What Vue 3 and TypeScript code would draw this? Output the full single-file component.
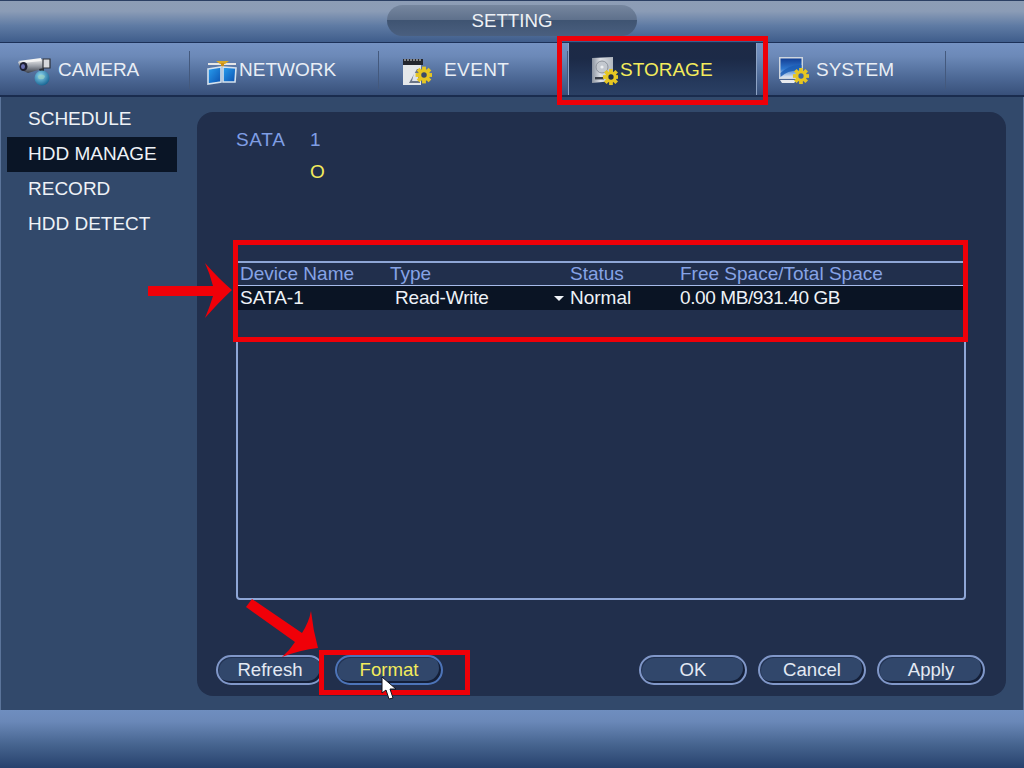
<script setup lang="ts">
const subItems = ['SCHEDULE', 'HDD MANAGE', 'RECORD', 'HDD DETECT']
const gearTeeth = [0, 45, 90, 135]
</script>

<template>
  <div class="screen">
    <header class="titlebar">
      <div class="pill">SETTING</div>
    </header>

    <nav class="tabs">
      <div class="tab">
        <svg class="icon camera" viewBox="0 0 36 30" width="36" height="30">
          <defs>
            <linearGradient id="camBody" x1="0" y1="0" x2="0" y2="1">
              <stop offset="0" stop-color="#f2f2f2" />
              <stop offset="0.5" stop-color="#9a9fa8" />
              <stop offset="1" stop-color="#3a3f4a" />
            </linearGradient>
            <radialGradient id="globe" cx="0.4" cy="0.35" r="0.7">
              <stop offset="0" stop-color="#8fd8f2" />
              <stop offset="1" stop-color="#12608f" />
            </radialGradient>
          </defs>
          <path d="M1 5 L27 2 L28 11 L11 16 L4 13 Z" fill="url(#camBody)" />
          <path d="M1 4 L24 1 L24 4 L6 6 Z" fill="#f4f4f4" />
          <path d="M26 2 h7 v9 h-7 z" fill="#d6d8dc" stroke="#2c3038" stroke-width="1.2" />
          <ellipse cx="6.5" cy="9.5" rx="4" ry="4.6" fill="#1e2032" />
          <ellipse cx="6" cy="9.5" rx="2" ry="2.6" fill="#6a6fb0" />
          <path d="M22 12 L27 11 L27 16 L24 17 Z" fill="#2a2e36" />
          <circle cx="25" cy="21" r="7.5" fill="url(#globe)" />
          <path d="M21 19 q4 -3 7 0 q-1 4 -4 3 q-3 1 -3 -3z" fill="#9ad0c0" opacity="0.7" />
        </svg>
        <span class="label">CAMERA</span>
      </div>

      <div class="tab">
        <svg class="icon network" viewBox="0 0 30 26" width="30" height="26">
          <defs>
            <linearGradient id="scr" x1="0" y1="0" x2="1" y2="1">
              <stop offset="0" stop-color="#2aa0f0" />
              <stop offset="1" stop-color="#0a50b0" />
            </linearGradient>
          </defs>
          <path d="M1 4 H29 V6 H1 Z" fill="#e6e6e6" />
          <path d="M9 2 H22 L18 5 H13 Z" fill="#dba927" />
          <path d="M14 4 h3 v4 h-3 z" fill="#c98f1c" />
          <path d="M1 10 L14 8 V23 L1 25 Z" fill="url(#scr)" stroke="#d5e2ee" stroke-width="1.6" />
          <path d="M16 8 L29 9 L28 23 L16 23 Z" fill="url(#scr)" stroke="#d5e2ee" stroke-width="1.6" />
        </svg>
        <span class="label tight">NETWORK</span>
      </div>

      <div class="tab">
        <svg class="icon event" viewBox="0 0 30 28" width="30" height="28">
          <rect x="1" y="2" width="20" height="6" fill="#23262e" />
          <path d="M2 3 h18" stroke="#ddd" stroke-dasharray="2 1" fill="none" />
          <rect x="1" y="8" width="18" height="20" fill="#e4e7ea" />
          <path d="M7 26 L15 12 L18 12 L18 26 Z" fill="#6c7688" />
          <path d="M12 16 L10 24 h7 l-2 -8z" fill="#dde2ea" />
          <g transform="translate(22 18) scale(1.2)">
            <g fill="#e6c622">
              <rect v-for="a in gearTeeth" :key="a" x="-1.6" y="-7" width="3.2" height="14" :transform="`rotate(${a})`" />
            </g>
            <circle r="5" fill="#e6c622" />
            <circle r="2.3" fill="#3a4a66" />
          </g>
        </svg>
        <span class="label wide">EVENT</span>
      </div>

      <div class="tab active">
        <svg class="icon storage" viewBox="0 0 28 30" width="28" height="30">
          <defs>
            <linearGradient id="hdd" x1="0" y1="0" x2="1" y2="0">
              <stop offset="0" stop-color="#8b93a0" />
              <stop offset="0.4" stop-color="#dde0e5" />
              <stop offset="1" stop-color="#b2b8c0" />
            </linearGradient>
          </defs>
          <path d="M2 2 L23 1 V25 L2 27 Z" fill="url(#hdd)" />
          <circle cx="12" cy="11" r="6" fill="#c3c8cf" stroke="#8d939c" />
          <circle cx="12" cy="11" r="1.6" fill="#eef0f2" />
          <rect x="5" y="21" width="9" height="2.4" fill="#3a3f48" />
          <g transform="translate(21 21) scale(1.15)">
            <g fill="#e6c622">
              <rect v-for="a in gearTeeth" :key="a" x="-1.6" y="-7" width="3.2" height="14" :transform="`rotate(${a})`" />
            </g>
            <circle r="5" fill="#e6c622" />
            <circle r="2.3" fill="#1f2c48" />
          </g>
        </svg>
        <span class="label tight yellow">STORAGE</span>
      </div>

      <div class="tab">
        <svg class="icon system" viewBox="0 0 32 30" width="32" height="30">
          <defs>
            <linearGradient id="mon" x1="0" y1="0" x2="0" y2="1">
              <stop offset="0" stop-color="#123f95" />
              <stop offset="0.55" stop-color="#2f78cf" />
              <stop offset="1" stop-color="#e4eaf2" />
            </linearGradient>
          </defs>
          <rect x="2" y="2" width="24" height="22" fill="#cfd6de" />
          <rect x="3.5" y="3.5" width="21" height="19" fill="url(#mon)" />
          <path d="M3.5 18 Q13 9 24.5 10 V16 Q13 14 3.5 22 Z" fill="#1b5db5" opacity="0.85" />
          <path d="M3 25 H20 L17 28 H5 Z" fill="#e8eaee" />
          <g transform="translate(24 21) scale(1.15)">
            <g fill="#e6c622">
              <rect v-for="a in gearTeeth" :key="a" x="-1.6" y="-7" width="3.2" height="14" :transform="`rotate(${a})`" />
            </g>
            <circle r="5" fill="#e6c622" />
            <circle r="2.3" fill="#3f67a6" />
          </g>
        </svg>
        <span class="label wide">SYSTEM</span>
      </div>
    </nav>

    <div class="main">
      <aside class="side">
        <div v-for="item in subItems" :key="item" class="side-item" :class="{ on: item === 'HDD MANAGE' }">{{ item }}</div>
      </aside>

      <section class="panel">
        <div class="sata">
          <div class="sata-row">
            <span class="sata-key">SATA</span>
            <span>1</span>
          </div>
          <div class="sata-row state">
            <span class="sata-key"></span>
            <span class="circle">O</span>
          </div>
        </div>

        <div class="table">
          <div class="thead">
            <span class="c1">Device Name</span>
            <span class="c2">Type</span>
            <span class="c3">Status</span>
            <span class="c4">Free Space/Total Space</span>
          </div>
          <div class="trow">
            <span class="c1">SATA-1</span>
            <span class="c2 type">Read-Write<i class="caret"></i></span>
            <span class="c3">Normal</span>
            <span class="c4 nums">0.00 MB/931.40 GB</span>
          </div>
        </div>

        <div class="actions">
          <div class="left-actions">
            <button class="btn">Refresh</button>
            <button class="btn hot">Format</button>
          </div>
          <div class="right-actions">
            <button class="btn">OK</button>
            <button class="btn">Cancel</button>
            <button class="btn">Apply</button>
          </div>
        </div>
      </section>
    </div>

    <footer class="footer"></footer>

    <!-- annotations drawn over the screenshot -->
    <div class="mark mark-storage"></div>
    <div class="mark mark-table"></div>
    <div class="mark mark-format"></div>
    <svg class="overlay" viewBox="0 0 1024 768" width="1024" height="768">
      <path d="M148 286 H213 Q210 274 205 263 Q219 279 232 290 Q219 302 205 318 Q210 306 213 296 H148 Z" fill="#f00008" />
      <path d="M252 599 L302 633 Q309 622 311 611 Q313 630 318 648 Q300 650 282 657 Q290 650 295 642 L246 607 Z" fill="#f00008" />
      <path d="M382 677 L382 693 L386 690 L389 699 L393 698 L390 689 L396 689 Z" fill="#fff" stroke="#10131c" stroke-width="1" />
    </svg>
  </div>
</template>

<style>
html, body { margin: 0; background: #32496b; }
</style>

<style scoped>
.screen {
  position: relative;
  width: 1024px;
  height: 768px;
  overflow: hidden;
  display: flex;
  flex-direction: column;
  font-family: "Liberation Sans", Arial, sans-serif;
  font-size: 19px;
  color: #e9eef5;
  background: #32496b;
}
.titlebar {
  height: 43px;
  flex: none;
  display: flex;
  justify-content: center;
  align-items: flex-start;
  padding-top: 5px;
  box-sizing: border-box;
  border-top: 1px solid #2b3f63;
  border-bottom: 1px solid #1c3158;
  background: linear-gradient(#8d9db5 0%, #8b9cb6 25%, #5f7ba4 60%, #3f5d8b 100%);
}
.pill {
  width: 250px;
  height: 31px;
  margin-top: -1px;
  border-radius: 16px;
  text-align: center;
  line-height: 32px;
  font-size: 18.7px;
  color: #eef1f5;
  background: linear-gradient(#76879f 0%, #5f718c 47%, #3f5472 50%, #4a5f7f 100%);
}
.tabs {
  height: 54px;
  flex: none;
  display: flex;
  box-sizing: border-box;
  border-bottom: 2px solid #1a2c4e;
  background: linear-gradient(#7492c2 0%, #6c89b8 25%, #4e6a97 65%, #38507a 100%);
}
.tab {
  width: 189px;
  flex: none;
  box-sizing: border-box;
  position: relative;
  display: flex;
  align-items: center;
  padding-top: 2px;
  padding-left: 17px;
}
.tab::after {
  content: "";
  position: absolute;
  right: -1px;
  top: 8px;
  bottom: 6px;
  width: 1px;
  background: #44597d;
}
.tab:nth-child(2) { padding-left: 18px; }
.tab:nth-child(3) { padding-left: 24px; }
.tab:nth-child(4) { padding-left: 21px; margin-left: 2px; width: 187px; }
.tab:nth-child(5) { padding-left: 21px; }
.icon { flex: none; display: block; }
.camera { margin-top: 4px; }
.network { margin-top: 3px; }
.event { margin-top: 2px; }
.storage { margin-top: 2px; }
.label { margin-left: 5px; }
.tight { margin-left: 2px; }
.wide { margin-left: 12px; }
.event + .label { letter-spacing: 0.4px; }
.system + .label { margin-left: 7px; }
.tab.active {
  background: linear-gradient(#1d2a46 0%, #1c2a47 30%, #25395c 75%, #2b4064 100%);
  box-shadow: -1px 0 0 #8ea3c4, 1px 0 0 #8ea3c4;
}
.tab.active::after { display: none; }
.yellow { color: #f3ec5c; }

.main {
  flex: 1;
  display: flex;
  min-height: 0;
  border-left: 1px solid #5b749a;
  border-right: 1px solid #5b749a;
  padding-right: 17px;
}
.side {
  width: 196px;
  flex: none;
  box-sizing: border-box;
  padding: 5px 0 0 6px;
}
.side-item {
  width: 170px;
  height: 35px;
  box-sizing: border-box;
  padding-left: 21px;
  line-height: 33px;
  color: #eef2f7;
}
.side-item.on { background: #0a1526; }

.panel {
  flex: 1;
  margin-top: 15px;
  margin-bottom: 14px;
  border-radius: 16px;
  background: #212f4c;
  position: relative;
  display: flex;
  flex-direction: column;
  box-sizing: border-box;
  padding: 0 21px 11px 19px;
}
.sata {
  padding: 12px 0 0 20px;
  color: #7f9ee4;
}
.sata-row {
  display: flex;
  height: 32px;
  line-height: 32px;
}
.sata-key { width: 74px; letter-spacing: 0.7px; }
.circle { color: #f3ec5c; }
.table {
  height: 339px;
  margin: 73px 19px 0 20px;
  box-sizing: border-box;
  border: 2px solid #8ea6d6;
  border-radius: 0 0 4px 4px;
}
.thead, .trow {
  display: flex;
  line-height: 24px;
  padding-left: 2px;
}
.thead {
  height: 23px;
  line-height: 22px;
  box-sizing: border-box;
  color: #86a3e6;
  border-bottom: 1px solid #a6bbea;
}
.trow { height: 24px; background: #0a1424; color: #eef2f7; }
.c1 { width: 150px; }
.c2 { width: 180px; }
.c3 { width: 110px; }
.c4 { flex: 1; }
.nums { letter-spacing: -0.4px; }
.type { position: relative; padding-left: 5px; box-sizing: border-box; letter-spacing: -0.2px; }
.caret {
  position: absolute;
  right: 6px;
  top: 10px;
  width: 0;
  height: 0;
  border-left: 5px solid transparent;
  border-right: 5px solid transparent;
  border-top: 5px solid #f0f3f8;
}
.actions {
  margin-top: auto;
  display: flex;
  justify-content: space-between;
}
.left-actions, .right-actions {
  display: flex;
  gap: 11px;
}
.btn {
  width: 108px;
  height: 30px;
  padding: 0;
  border: 2px solid #8097c8;
  border-radius: 15px;
  background: #31476b;
  box-shadow: inset -2px -2px 0 #141f38, inset 1px 1px 0 #223353;
  color: #e3e9f3;
  font: inherit;
  font-size: 18.6px;
  line-height: 26px;
}
.btn.hot { color: #f3ec5c; border-color: #4d74b8; }
.footer {
  height: 58px;
  flex: none;
  background: linear-gradient(#6f8ebf 0%, #6a88b8 20%, #46648f 60%, #27416d 100%);
}
.mark {
  position: absolute;
  box-sizing: border-box;
  border: 5px solid #ee0008;
}
.mark-storage { left: 557px; top: 36px; width: 211px; height: 69px; }
.mark-table { left: 233px; top: 240px; width: 735px; height: 102px; }
.mark-format { left: 319px; top: 650px; width: 151px; height: 45px; }
.overlay { position: absolute; left: 0; top: 0; pointer-events: none; }
</style>
